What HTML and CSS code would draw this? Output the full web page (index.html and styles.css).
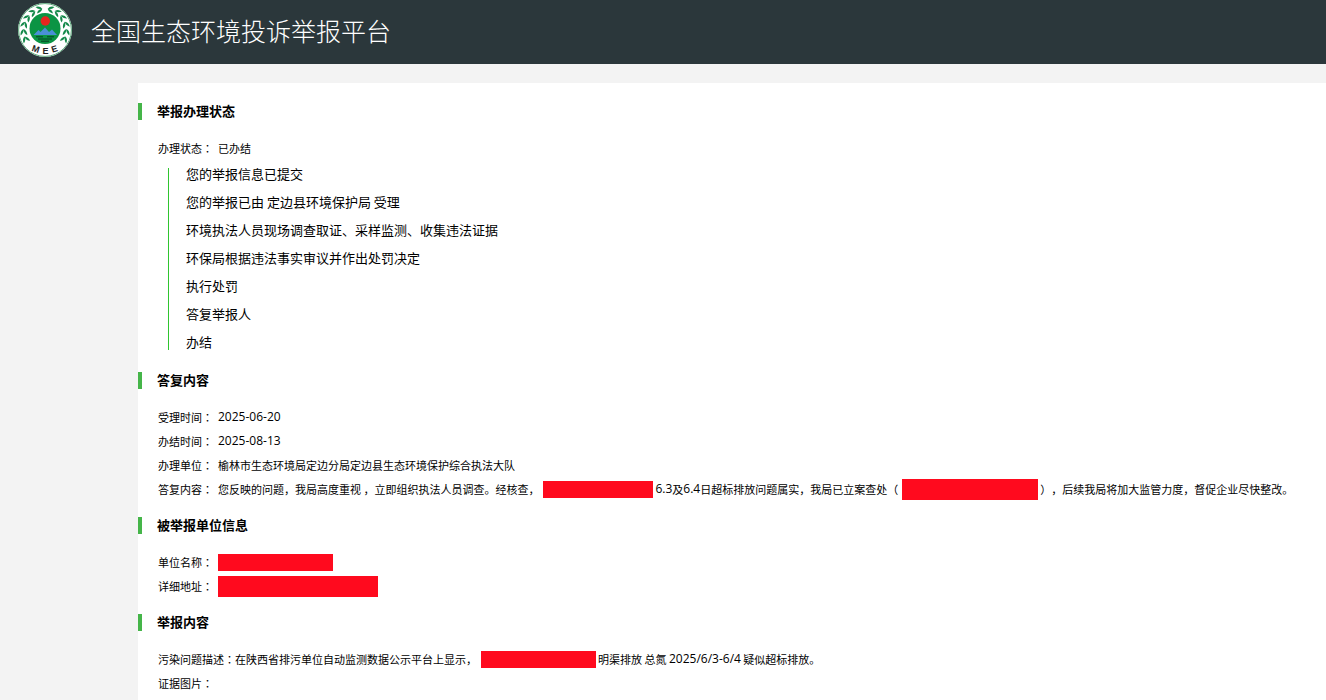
FILE: index.html
```html
<!DOCTYPE html>
<html lang="zh-CN">
<head>
    <meta charset="UTF-8">
    <meta name="viewport" content="width=device-width, initial-scale=1.0">
    <title>全国生态环境投诉举报平台</title>
    <link rel="stylesheet" href="styles.css">
</head>
<body>
    <header class="header">
        <svg class="logo" viewBox="0 0 54 54" aria-hidden="true">
            <defs>
                <g id="leaf">
                    <path d="M28 5.6 Q24.5 6.2 21.6 2.6 Q26.2 2 28 5.6Z"/>
                    <path d="M28 5.6 Q26.4 9 22 9.4 Q23.2 5.6 28 5.6Z"/>
                </g>
                <g id="branch">
                    <use href="#leaf" transform="rotate(-10 27 27)"/>
                    <use href="#leaf" transform="rotate(-30 27 27)"/>
                    <use href="#leaf" transform="rotate(-50 27 27)"/>
                    <use href="#leaf" transform="rotate(-70 27 27)"/>
                    <use href="#leaf" transform="rotate(-90 27 27)"/>
                    <use href="#leaf" transform="rotate(-110 27 27)"/>
                </g>
            </defs>
            <circle cx="27" cy="27" r="27" fill="#fff"/>
            <circle cx="27" cy="27" r="26.4" fill="none" stroke="#5aa97a" stroke-width="1"/>
            <g fill="#14894a">
                <use href="#branch"/>
                <use href="#branch" transform="matrix(-1 0 0 1 54 0)"/>
            </g>
            <circle cx="27" cy="25.5" r="15.5" fill="#0b9444"/>
            <circle cx="27.3" cy="18" r="4.7" fill="#e5261f"/>
            <path d="M15.5 32 L20.5 27 L22.5 29 L27 24.5 L31 29 L34 26.5 L39 32Z" fill="#4a8fd6"/>
            <path d="M18 33.8h7M29 33.8h7M20 36h14M23 38.2h8" stroke="#063f22" stroke-width="1"/>
            <g class="logo-text">
                <text x="17.8" y="49" transform="rotate(18 17.8 46)">M</text>
                <text x="27.6" y="51">E</text>
                <text x="36.4" y="49" transform="rotate(-18 36.4 46)">E</text>
            </g>
        </svg>
        <h1>全国生态环境投诉举报平台</h1>
    </header>

    <main class="panel">
        <section>
            <h2>举报办理状态</h2>
            <dl>
                <div class="row"><dt>办理状态<span class="colon" lang="zh-TW">：</span></dt><dd>已办结</dd></div>
            </dl>
            <ul class="steps">
                <li>您的举报信息已提交</li>
                <li>您的举报已由 定边县环境保护局 受理</li>
                <li>环境执法人员现场调查取证、采样监测、收集违法证据</li>
                <li>环保局根据违法事实审议并作出处罚决定</li>
                <li>执行处罚</li>
                <li>答复举报人</li>
                <li>办结</li>
            </ul>
        </section>

        <section>
            <h2>答复内容</h2>
            <dl>
                <div class="row"><dt>受理时间<span class="colon" lang="zh-TW">：</span></dt><dd><span class="num">2025-06-20</span></dd></div>
                <div class="row"><dt>办结时间<span class="colon" lang="zh-TW">：</span></dt><dd><span class="num">2025-08-13</span></dd></div>
                <div class="row"><dt>办理单位<span class="colon" lang="zh-TW">：</span></dt><dd>榆林市生态环境局定边分局定边县生态环境保护综合执法大队</dd></div>
                <div class="row">
                    <dt>答复内容<span class="colon" lang="zh-TW">：</span></dt>
                    <dd>您反映的问题，我局高度重视 ，立即组织执法人员调查。经核查，<span class="redact w-110"></span><span class="num">6.3</span>及<span class="num">6.4</span>日超标排放问题属实，我局已立案查处（<span class="redact tall w-136"></span>），后续我局将加大监管力度，督促企业尽快整改。</dd>
                </div>
            </dl>
        </section>

        <section>
            <h2>被举报单位信息</h2>
            <dl>
                <div class="row"><dt>单位名称<span class="colon" lang="zh-TW">：</span></dt><dd class="hidden-value"><span class="redact w-115"></span></dd></div>
                <div class="row"><dt>详细地址<span class="colon" lang="zh-TW">：</span></dt><dd class="hidden-value"><span class="redact tall w-160"></span></dd></div>
            </dl>
        </section>

        <section>
            <h2>举报内容</h2>
            <dl>
                <div class="row">
                    <dt>污染问题描述<span class="colon" lang="zh-TW">：</span></dt>
                    <dd>在陕西省排污单位自动监测数据公示平台上显示，<span class="redact w-115"></span>明渠排放 总氮 <span class="num">2025/6/3-6/4</span> 疑似超标排放。</dd>
                </div>
                <div class="row"><dt>证据图片<span class="colon" lang="zh-TW">：</span></dt><dd></dd></div>
            </dl>
        </section>
    </main>
</body>
</html>
```
FILE: styles.css
```css
* {
    box-sizing: border-box;
}

body {
    margin: 0;
    font-family: "Noto Sans CJK SC", sans-serif;
    font-size: 11px;
    text-spacing-trim: space-all;
    color: #000;
    background-color: #f3f3f3;
    overflow: hidden;
}

.header {
    display: flex;
    align-items: center;
    gap: 19px;
    height: 64px;
    padding: 0 18px 4px;
    background-color: #2b373b;
}

.logo {
    width: 54px;
    height: 54px;
}

.logo-text {
    font: bold 9px "Liberation Sans", sans-serif;
    text-anchor: middle;
    fill: #222;
}

h1 {
    margin: 0;
    font-size: 25px;
    font-weight: 300;
    line-height: 32px;
    color: #fff;
}

.panel {
    display: flex;
    flex-direction: column;
    gap: 16px;
    margin: 19px 0 0 138px;
    padding: 20px 0;
    background-color: #fff;
    white-space: nowrap;
}

h2 {
    margin: 0 0 16px;
    padding: 0 0 2px 15px;
    border-left: 4px solid #45b549;
    font-size: 13px;
    line-height: 15px;
}

dl {
    margin: 0 0 0 20px;
}

.row {
    display: flex;
    height: 24px;
    line-height: 24px;
}

dt {
    min-width: 60px;
}

dd {
    display: flex;
    align-items: center;
    margin: 0;
    white-space: pre;
}

/* full-width colon centred in its cell */
.colon {
    font-family: "Noto Sans CJK TC", sans-serif;
}

.num {
    font-family: "Open Sans", sans-serif;
    font-size: 12px;
}

.steps {
    display: flex;
    flex-direction: column;
    gap: 16px;
    margin: 8px 0 6px 30px;
    padding: 0 0 2px 17px;
    border-left: 1px solid #2fc52f;
    list-style: none;
    font-size: 13px;
    line-height: 12px;
}

/* blanked-out personal details */
.redact {
    height: 17px;
    margin: 0 2px 0 4px;
    background-color: #ff0a1e;
}

.tall {
    height: 21px;
}

.hidden-value .redact {
    margin: 0;
}

.w-110 {
    width: 110px;
}

.w-115 {
    width: 115px;
}

.w-136 {
    width: 136px;
}

.w-160 {
    width: 160px;
}
```
